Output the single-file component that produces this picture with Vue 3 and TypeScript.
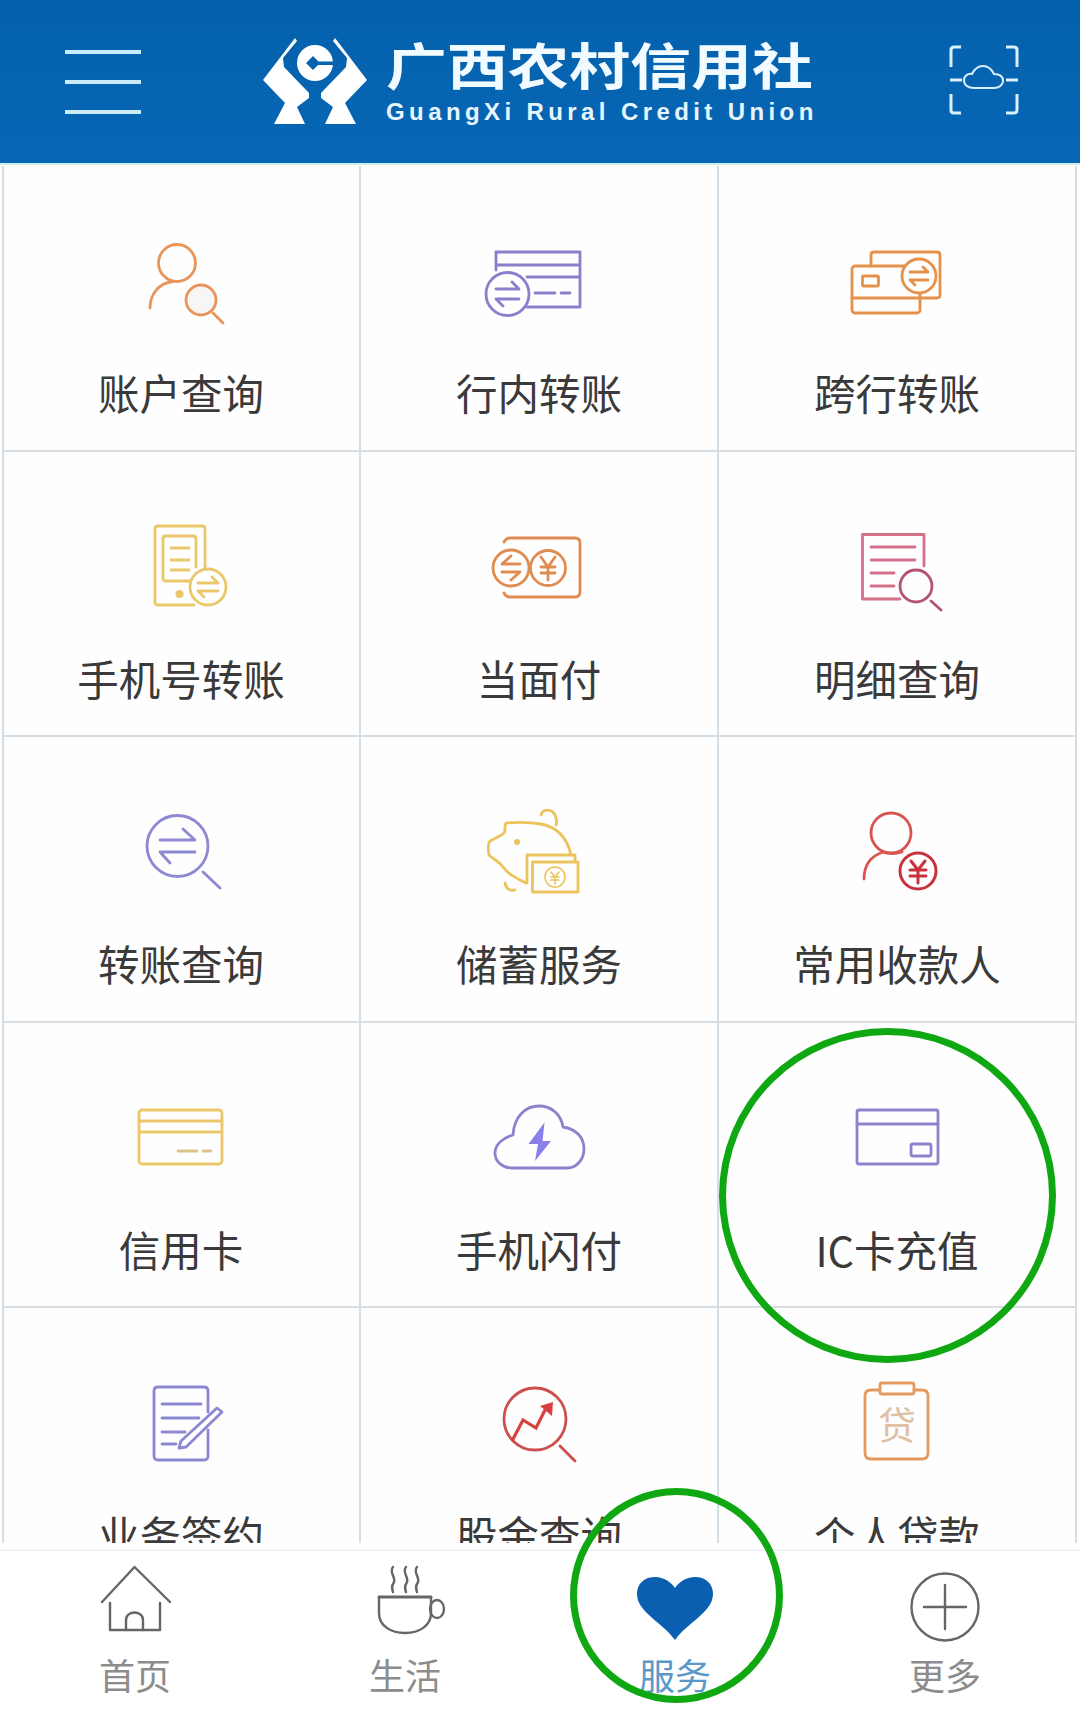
<script setup lang="ts">
interface Cell { label: string; icon: string; color: string }

const cells: Cell[] = [
  { label: '账户查询', icon: 'account', color: '#e8955c' },
  { label: '行内转账', icon: 'transfer', color: '#8a7fcb' },
  { label: '跨行转账', icon: 'interbank', color: '#e5914a' },
  { label: '手机号转账', icon: 'phone', color: '#ebc76c' },
  { label: '当面付', icon: 'face', color: '#e08c50' },
  { label: '明细查询', icon: 'detail', color: '#d4708a' },
  { label: '转账查询', icon: 'search', color: '#8d88d2' },
  { label: '储蓄服务', icon: 'pig', color: '#ebc45c' },
  { label: '常用收款人', icon: 'payee', color: '#d9534f' },
  { label: '信用卡', icon: 'credit', color: '#ebc76c' },
  { label: '手机闪付', icon: 'cloud', color: '#8d82cc' },
  { label: 'IC卡充值', icon: 'ic', color: '#8d82cc' },
  { label: '业务签约', icon: 'sign', color: '#8d88d2' },
  { label: '股金查询', icon: 'stock', color: '#cc4f4f' },
  { label: '个人贷款', icon: 'loan', color: '#e4995e' },
]

const tabs = [
  { label: '首页', icon: 'home' },
  { label: '生活', icon: 'cup' },
  { label: '服务', icon: 'heart' },
  { label: '更多', icon: 'plus' },
]
</script>

<template>
  <div class="page">
    <header class="topbar">
      <div class="menu"><span></span><span></span><span></span></div>
      <div class="brand">
        <svg class="logo" viewBox="0 0 130 120" width="130" height="120">
          <path fill="#fff" d="M45 18 L13 60 L35 83 L24 104 L55 104 L47 87 L59 78 L59 73 L34 47 L33 38 L47 21 Z" />
          <path fill="#fff" d="M85 18 L117 60 L95 83 L106 104 L75 104 L83 87 L71 78 L71 73 L96 47 L97 38 L83 21 Z" />
          <circle cx="65" cy="43" r="18" fill="#fff" />
          <path fill="#0663b0" d="M63 36 L70 43 L63 50 L56 43 Z M64 41.5 H84 V45 H64 Z" />
        </svg>
        <div class="brand-text">
          <div class="brand-cn">广西农村信用社</div>
          <div class="brand-en">GuangXi Rural Credit Union</div>
        </div>
      </div>
      <svg class="scan" viewBox="0 0 70 70" width="70" height="70" fill="none" stroke="#d9f1fc" stroke-width="3">
        <path d="M2 22 V5 Q2 2 5 2 H12 M57 2 H65 Q68 2 68 5 V22 M2 49 V65 Q2 68 5 68 H12 M57 68 H65 Q68 68 68 65 V49" />
        <path d="M1 35 H13 M57 35 H69" />
        <path stroke-width="2" d="M25 43 C19 43 15 40 15 35 C15 31 19 28 23 29 C25 25 29 21 34 21 C39 21 43 25 45 29 C50 29 54 31 54 36 C54 40 50 43 45 43 Z" />
      </svg>
    </header>

    <main class="grid-wrap">
      <div class="grid">
        <div v-for="c in cells" :key="c.label" class="cell">
          <svg class="icon" viewBox="0 0 120 120" width="120" height="120" fill="none" :stroke="c.color" stroke-width="2.8" stroke-linecap="round" stroke-linejoin="round">
            <template v-if="c.icon === 'account'">
              <circle cx="56" cy="39" r="18.5" />
              <path d="M29 84 C29 70 38 59 52 57.5" />
              <circle cx="80" cy="76" r="15" fill="#f6f6f6" />
              <path d="M92 89 L102 99" />
            </template>
            <template v-else-if="c.icon === 'transfer'">
              <path d="M17 46 V28 H101 V83 H48 M17 41 H101 M48 53 H101" />
              <path d="M56 69 H76 M82 69 H91" />
              <circle cx="28.5" cy="70" r="21.5" fill="#fff" />
              <path d="M17 65 H40 L33 58 M40 75 H17 L24 82" />
            </template>
            <template v-else-if="c.icon === 'interbank'">
              <path d="M34 42 V31 Q34 28 37 28 H100 Q103 28 103 31 V71 Q103 74 100 74 H83" />
              <rect x="15" y="42" width="68" height="47" rx="3" />
              <path d="M15 74 H83" />
              <rect x="25.5" y="52" width="16" height="10" rx="1" />
              <circle cx="82" cy="52" r="17" fill="#fff" />
              <path d="M73 48 H91 L86 43 M91 56 H73 L78 61" />
            </template>
            <template v-else-if="c.icon === 'phone'">
              <path d="M73 95 H37 Q34 95 34 92 V19 Q34 16 37 16 H81 Q84 16 84 19 V58" />
              <path d="M75 57 V29 Q75 26 72 26 H45 Q42 26 42 29 V68 Q42 71 45 71 H69" />
              <path d="M50 38 H68 M50 50 H68 M50 60 H68" />
              <circle cx="58.5" cy="84" r="4" :fill="c.color" stroke="none" />
              <circle cx="87" cy="77" r="18" fill="#fff" />
              <path d="M77 73 H97 L91 67 M97 81 H77 L83 87" />
            </template>
            <template v-else-if="c.icon === 'face'">
              <path d="M25 32 Q27 28 31 28 H96 Q101 28 101 33 V82 Q101 87 96 87 H31 Q27 87 25 83" />
              <circle cx="32" cy="58" r="18" fill="#fff" />
              <circle cx="69" cy="58" r="17.5" fill="#fff" />
              <path d="M41 54 H23 L32 46 M23 62 H41 L32 70" />
              <path d="M62 47 L69 57 L76 47 M62 57 H76 M62 63 H76 M69 57 V70" />
            </template>
            <template v-else-if="c.icon === 'detail'">
              <path d="M63 89 H25.5 V24.5 H87 V56" />
              <path d="M34 37 H78 M34 50 H78 M34 63 H57 M34 76 H57" />
              <circle cx="79" cy="76" r="16" stroke="#b45474" />
              <path d="M94 91 L104 100" stroke="#b45474" />
            </template>
            <template v-else-if="c.icon === 'search'">
              <circle cx="56.5" cy="51" r="30.5" />
              <path d="M39 45 H74 L62 34 M74 57 H39 L49 68" />
              <path d="M82 77 L99 93" />
            </template>
            <template v-else-if="c.icon === 'pig'">
              <path d="M62 20 C64 13 73 14 76 20 C78 24 78 27 77 30" />
              <path d="M92 60 C88 42 78 32 62 29 C50 27 38 27 27 28 C25 32 27 35 25 38 C21 42 15 43 10 47 C9 52 9 56 10 60 C14 64 20 66 25 73 C29 79 37 83 47 88" />
              <path d="M26 88 C27 94 31 96 36 95" />
              <circle cx="38" cy="47" r="3" :fill="c.color" stroke="none" />
              <path d="M48 88 V60 H96 V66" />
              <rect x="53.5" y="67" width="45.5" height="30" />
              <circle cx="76" cy="82" r="10" stroke-width="1.6" />
              <path stroke-width="1.6" d="M72 77 L76 82 L80 77 M72 82 H80 M72 85 H80 M76 82 V89" />
            </template>
            <template v-else-if="c.icon === 'payee'">
              <circle cx="54" cy="38" r="20" />
              <path d="M27 84 C27 70 34 61 46 57 M46 57 Q55 60 65 57" />
              <circle cx="81" cy="76" r="18" stroke="#c8323c" stroke-width="3" />
              <path stroke="#c8323c" stroke-width="3" d="M74 66 L81 75 L88 66 M73 75 H89 M73 81 H89 M81 75 V88" />
            </template>
            <template v-else-if="c.icon === 'credit'">
              <rect x="18" y="29" width="83" height="54" rx="3" />
              <path d="M18 40 H101 M18 51 H101" />
              <path stroke="#dcc38c" d="M57 70 H76 M82 70 H90" />
            </template>
            <template v-else-if="c.icon === 'cloud'">
              <path d="M33 87 H88 C98 87 105 78 105 68 C105 56 97 48 84 46 C82 33 72 25 60 25 C46 25 35 36 34 54 C23 57 16 64 16 72 C16 81 24 87 33 87 Z" />
              <path fill="#8a7ee8" stroke="none" d="M65.5 41.5 L49.5 63 H59 L56 80 L72 60 H63.5 Z" />
            </template>
            <template v-else-if="c.icon === 'ic'">
              <rect x="20" y="29" width="81" height="54" rx="2" />
              <path d="M20 43 H101" />
              <rect x="74" y="63" width="20" height="12" rx="2" />
            </template>
            <template v-else-if="c.icon === 'sign'">
              <path d="M87 46 V25 Q87 21 83 21 H37 Q33 21 33 25 V90 Q33 94 37 94 H83 Q87 94 87 90 V64" />
              <path d="M41 38 H80 M41 52 H78 M41 66 H64 M41 78 H55" />
              <path fill="#fff" d="M96 42 L101 46 L65 81 L58 82 L60 75 Z" />
            </template>
            <template v-else-if="c.icon === 'stock'">
              <circle cx="56" cy="53" r="31" />
              <path stroke="#d8403f" stroke-width="3.2" stroke-linecap="butt" stroke-linejoin="miter" d="M33 75 L44 54 L57 62 L67 42" />
              <path fill="#d8403f" stroke="none" d="M61 40 L74 36 L73 50 Z" />
              <path d="M81 80 L96 95" />
            </template>
            <template v-else-if="c.icon === 'loan'">
              <path d="M42 24 H34 Q28 24 28 30 V87 Q28 93 34 93 H85 Q91 93 91 87 V30 Q91 24 85 24 H77" />
              <rect x="43" y="17" width="34" height="11" rx="2" />
              <text x="60" y="73" class="loan-char" text-anchor="middle">贷</text>
            </template>
          </svg>
          <div class="label">{{ c.label }}</div>
        </div>
      </div>
    </main>

    <nav class="tabs">
      <div v-for="t in tabs" :key="t.label" class="tab" :class="{ active: t.icon === 'heart' }">
        <svg viewBox="0 0 90 90" width="90" height="90" fill="none" stroke="#666" stroke-width="2.4" stroke-linecap="round" stroke-linejoin="round">
          <template v-if="t.icon === 'home'">
            <path d="M12 42 L44.5 7 L80 42" />
            <path d="M20 43 V70 H70 V43" />
            <path d="M36 70 V60 C36 50 53 50 53 60 V70" />
          </template>
          <template v-else-if="t.icon === 'cup'">
            <path d="M19 37 H71" stroke-width="3" />
            <path d="M19 37 V53 C19 66 31 73 45 73 C59 73 71 66 71 53 V37" />
            <ellipse cx="77" cy="49" rx="7" ry="9" />
            <path d="M33 7 C28 13 38 18 33 24 C31 27 32 29 33 32 M46 7 C41 13 51 18 46 24 C44 27 45 29 46 32 M57 7 C52 13 62 18 57 24 C55 27 56 29 57 32" />
          </template>
          <template v-else-if="t.icon === 'heart'">
            <path fill="#0a5fb0" stroke="none" d="M45 80 C32 62 7 52 7 34 C7 23 15 17 25 17 C34 17 41 22 45 28 C49 22 56 17 65 17 C75 17 83 23 83 34 C83 52 58 62 45 80 Z" />
          </template>
          <template v-else>
            <circle cx="45" cy="47" r="33.5" />
            <path d="M24 47 H66 M45 25 V69" />
          </template>
        </svg>
        <div class="tab-label">{{ t.label }}</div>
      </div>
    </nav>

    <i class="ring ring-ic"></i>
    <i class="ring ring-tab"></i>
  </div>
</template>

<style>
html, body { margin: 0; padding: 0; background: #fff; }
</style>

<style scoped>
* { box-sizing: border-box; }
.page {
  position: relative;
  width: 1080px;
  height: 1710px;
  overflow: hidden;
  display: flex;
  flex-direction: column;
  background: #fff;
  font-family: "Noto Sans CJK SC", "Noto Sans", sans-serif;
}
.topbar {
  flex: 0 0 163px;
  display: flex;
  align-items: flex-start;
  background: linear-gradient(#0460ab, #0767b6);
  padding: 46px 61px 0 65px;
}
.menu { width: 76px; height: 64px; display: flex; flex-direction: column; justify-content: space-between; margin-top: 4px; }
.menu span { display: block; height: 4px; background: #c9ecfb; }
.brand { display: flex; margin: -26px 0 0 109px; }
.logo { flex: none; }
.brand-text { margin: 16px 0 0 6px; width: 430px; }
.brand-cn {
  color: #f2fbff;
  font-size: 50px;
  font-weight: 700;
  line-height: 54px;
  white-space: nowrap;
  transform: scaleX(1.22);
  transform-origin: left center;
}
.brand-en {
  color: #e6f6fd;
  font-family: "Liberation Sans", sans-serif;
  font-size: 24px;
  font-weight: 700;
  letter-spacing: 4.4px;
  line-height: 24px;
  margin-top: 10px;
  white-space: nowrap;
}
.scan { flex: none; margin: -1px 0 0 auto; }
.grid-wrap {
  flex: 1;
  overflow: hidden;
  border-top: 2px solid #d3edf5;
  background: #fff;
  padding-left: 2px;
}
.grid {
  display: grid;
  grid-template-columns: 359px 358px 358px;
  grid-auto-rows: 285.5px;
  margin-top: 1px;
}
.cell {
  display: flex;
  flex-direction: column;
  align-items: center;
  background: #fefefe;
  border-right: 2px solid #d2dee8;
  border-bottom: 2px solid #d8dee4;
  padding-top: 58px;
}
.cell:nth-child(3n + 1) { border-left: 2px solid #d2dee8; padding-right: 1px; }
.icon { flex: none; overflow: visible; }
.label {
  margin-top: 18px;
  font-size: 41.5px;
  line-height: 60px;
  color: #3a3a3a;
  white-space: nowrap;
}
.loan-char { font-size: 38px; fill: #e0c0a4; stroke: none; font-family: "Noto Sans CJK SC", sans-serif; }
.tabs {
  flex: 0 0 167px;
  display: grid;
  grid-template-columns: repeat(4, 270px);
  background: #fff;
  padding-top: 17px;
  box-shadow: inset 0 6px 0 #fff, inset 0 8px 0 #f2f2f6;
}
.tab { display: flex; flex-direction: column; align-items: center; }
.tab-label { font-size: 36px; line-height: 44px; color: #8c8c8c; margin-top: 2px; }
.tab.active .tab-label { color: #5a98c9; }
.ring { position: absolute; display: block; border: 7px solid #10a812; border-radius: 50%; }
.ring-ic { left: 719px; top: 1028px; width: 337px; height: 335px; }
.ring-tab { left: 570px; top: 1488px; width: 213px; height: 215px; }
</style>
